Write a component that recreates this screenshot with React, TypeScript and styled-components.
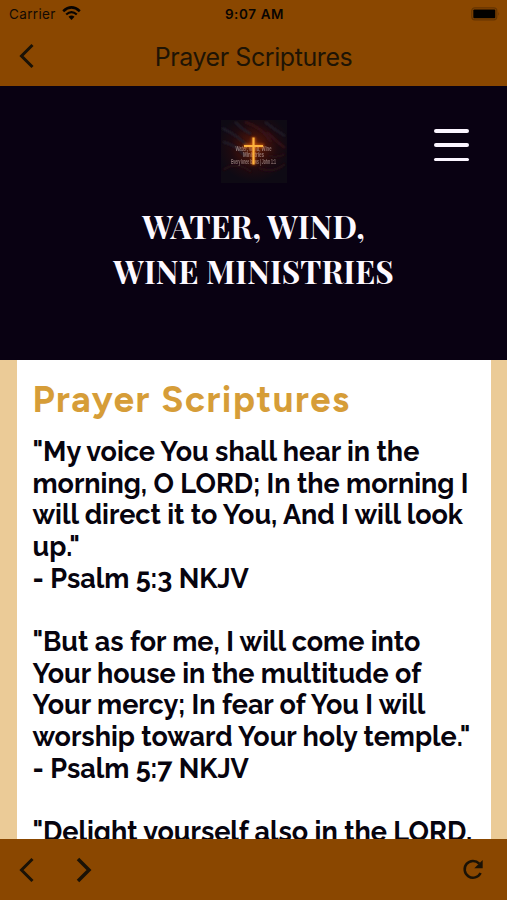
import React from "react";
import styled, { createGlobalStyle } from "styled-components";

const GlobalStyle = createGlobalStyle`
  * { box-sizing: border-box; }
  html, body { margin: 0; padding: 0; overflow: hidden; }
`;

const Screen = styled.div`
  width: 507px;
  height: 900px;
  display: flex;
  flex-direction: column;
  overflow: hidden;
  background: #8a4700;
`;

const StatusBar = styled.div`
  height: 27px;
  flex: none;
  display: grid;
  grid-template-columns: 1fr auto 1fr;
  align-items: center;
  padding: 0 7px 0 9px;
  font-family: Inter, sans-serif;
  font-size: 13.5px;
  color: #120a04;
`;

const CarrierGroup = styled.div`
  display: flex;
  align-items: center;
  gap: 6px;
  letter-spacing: 0.35px;
`;

const Clock = styled.div`
  font-weight: 600;
  letter-spacing: 0.6px;
  color: #080402;
`;

const BatteryGroup = styled.div`
  display: flex;
  justify-content: flex-end;
  align-items: center;
`;

const NavBar = styled.header`
  height: 59px;
  flex: none;
  display: grid;
  grid-template-columns: 60px 1fr 60px;
  align-items: center;
  padding-bottom: 1px;
  color: #1e1405;
`;

const IconButton = styled.button<{ $width: number; $pad: number }>`
  width: ${(p) => p.$width}px;
  height: 40px;
  display: flex;
  align-items: center;
  padding: 0 0 0 ${(p) => p.$pad}px;
  border: 0;
  background: transparent;
  color: #1a1206;
`;

const NavTitle = styled.h1`
  margin: 0;
  padding-top: 2px;
  text-align: center;
  font: 400 25px/32px Inter, sans-serif;
  letter-spacing: -0.42px;
  white-space: nowrap;
`;

const SiteHeader = styled.section`
  height: 274px;
  flex: none;
  display: grid;
  grid-template-columns: 100px 1fr 100px;
  grid-template-rows: 62px auto;
  row-gap: 22px;
  padding-top: 34px;
  background: #090112;
`;

const Logo = styled.div`
  grid-column: 2;
  display: flex;
  justify-content: center;
`;

const MenuButton = styled.button`
  grid-column: 3;
  margin: 9px 0 0 27px;
  width: 35px;
  height: 32px;
  display: flex;
  flex-direction: column;
  justify-content: space-between;
  padding: 0;
  border: 0;
  background: transparent;
`;

const MenuLine = styled.span`
  height: 3.5px;
  border-radius: 2px;
  background: #fbf5ff;
`;

const SiteName = styled.h2`
  grid-column: 1 / -1;
  margin: 0;
  text-align: center;
  font: 700 31.6px/44.5px "Playfair Display", "Liberation Serif", serif;
  color: #fdf9ff;
`;

const Page = styled.main`
  height: 479px;
  flex: none;
  overflow: hidden;
  padding: 0 16px 0 17px;
  background: #ebcb97;
`;

const Sheet = styled.article`
  height: 100%;
  overflow: hidden;
  padding: 14px 0 0 15.5px;
  background: #fff;
`;

const PageTitle = styled.h3`
  margin: 0 0 12px;
  font: 700 36.5px/50px Figtree, Lato, sans-serif;
  letter-spacing: 1.55px;
  color: #d69d38;
`;

const Verse = styled.p`
  margin: 0 0 31.65px;
  font: 700 27px/31.65px Raleway, Lato, sans-serif;
  letter-spacing: -0.04px;
  color: #07040e;
  white-space: pre;
`;

const Toolbar = styled.footer`
  height: 61px;
  flex: none;
  display: flex;
  align-items: center;
`;

const Spacer = styled.div`
  flex: 1;
`;

const Chevron = ({ forward = false }: { forward?: boolean }) => (
  <svg width="17" height="26" viewBox="0 0 17 26" fill="none" stroke="currentColor" strokeWidth={forward ? 3.5 : 3}>
    <path d={forward ? "M3 2 L14 13 L3 24" : "M14.5 2 L3.5 13 L14.5 24"} />
  </svg>
);

const WifiIcon = () => (
  <svg width="19" height="15" viewBox="0 0 19 15" fill="none" stroke="#080402">
    <path d="M1.2 5.2 Q9.5 -2.4 17.8 5.2" strokeWidth="2.6" />
    <path d="M4.2 8.5 Q9.5 3.8 14.8 8.5" strokeWidth="2.3" />
    <path d="M6.5 10.7 Q9.5 8.3 12.5 10.7 L9.5 14 Z" fill="#080402" stroke="none" />
  </svg>
);

const BatteryIcon = () => (
  <svg width="30" height="14" viewBox="0 0 30 14">
    <rect x="1.8" y="0.8" width="25" height="12" rx="3" fill="none" stroke="#653502" strokeWidth="1.2" />
    <rect x="3.3" y="2.5" width="22" height="8.7" rx="1" fill="#030100" />
    <path d="M28.2 4.8 Q30 6.8 28.2 8.8 Z" fill="#6f3603" />
  </svg>
);

const RefreshIcon = () => (
  <svg width="22" height="22" viewBox="0 0 22 22">
    <path d="M17.2 4.6 A8.4 8.4 0 1 0 18.6 14" fill="none" stroke="currentColor" strokeWidth="2.5" />
    <path d="M20.7 1 V9.3 H12.3 Z" fill="currentColor" />
  </svg>
);

const LogoArt = () => (
  <svg width="66" height="63" viewBox="0 0 66 63">
    <defs>
      <radialGradient id="glow" cx="0.5" cy="0.43" r="0.55">
        <stop offset="0" stopColor="#7a2a08" />
        <stop offset="0.3" stopColor="#42120a" />
        <stop offset="0.65" stopColor="#1e0a10" />
        <stop offset="1" stopColor="#0e0a14" />
      </radialGradient>
      <filter id="soft" x="-20%" y="-20%" width="140%" height="140%">
        <feGaussianBlur stdDeviation="1" />
      </filter>
    </defs>
    <rect width="66" height="63" fill="url(#glow)" />
    <g filter="url(#soft)" fill="none" strokeWidth="2">
      <path d="M1 8 Q18 16 28 28 M2 22 Q14 24 24 36 M14 2 Q22 10 30 14" stroke="#24222f" />
      <path d="M24 2 Q42 8 50 22 M46 12 Q56 22 64 28" stroke="#3a141a" />
      <path d="M44 2 Q54 10 64 16" stroke="#24222f" />
      <path d="M2 50 Q16 40 30 52 M38 48 Q52 54 64 44 M48 36 Q58 38 64 34" stroke="#2a1017" />
    </g>
    <g fill="#b39a96" opacity="0.75" fontFamily="Liberation Sans, sans-serif" fontWeight="700" fontSize="6.5" textAnchor="middle">
      <text x="32.5" y="30.7" fontSize="7" textLength="36" lengthAdjust="spacingAndGlyphs">Water, Wind, Wine</text>
      <text x="32.5" y="37.2" textLength="21" lengthAdjust="spacingAndGlyphs">Ministries</text>
      <text x="32.5" y="43.8" textLength="45" lengthAdjust="spacingAndGlyphs">Every knee bows | John 1:1</text>
    </g>
    <path d="M32.5 17 V45 M22.5 26 H43" stroke="#e0650c" strokeWidth="4.5" opacity="0.6" filter="url(#soft)" />
    <path d="M32.5 17.5 V44.5 M23 26 H42" stroke="#fdb23c" strokeWidth="2.2" />
  </svg>
);

const verses = [
  `"My voice You shall hear in the
morning, O LORD; In the morning I
will direct it to You, And I will look
up."
- Psalm 5:3 NKJV`,
  `"But as for me, I will come into
Your house in the multitude of
Your mercy; In fear of You I will
worship toward Your holy temple."
- Psalm 5:7 NKJV`,
  `"Delight yourself also in the LORD,`,
];

export default function App() {
  return (
    <Screen>
      <GlobalStyle />
      <StatusBar>
        <CarrierGroup>
          Carrier
          <WifiIcon />
        </CarrierGroup>
        <Clock>9:07 AM</Clock>
        <BatteryGroup>
          <BatteryIcon />
        </BatteryGroup>
      </StatusBar>
      <NavBar>
        <IconButton $width={60} $pad={18} aria-label="Back">
          <Chevron />
        </IconButton>
        <NavTitle>Prayer Scriptures</NavTitle>
      </NavBar>
      <SiteHeader>
        <Logo>
          <LogoArt />
        </Logo>
        <MenuButton aria-label="Menu">
          <MenuLine />
          <MenuLine />
          <MenuLine />
        </MenuButton>
        <SiteName>
          WATER, WIND,
          <br />
          WINE MINISTRIES
        </SiteName>
      </SiteHeader>
      <Page>
        <Sheet>
          <PageTitle>Prayer Scriptures</PageTitle>
          {verses.map((text) => (
            <Verse key={text}>{text}</Verse>
          ))}
        </Sheet>
      </Page>
      <Toolbar>
        <IconButton $width={56} $pad={18} aria-label="Previous page">
          <Chevron />
        </IconButton>
        <IconButton $width={57} $pad={19} aria-label="Next page">
          <Chevron forward />
        </IconButton>
        <Spacer />
        <IconButton $width={46} $pad={1} aria-label="Reload">
          <RefreshIcon />
        </IconButton>
      </Toolbar>
    </Screen>
  );
}
